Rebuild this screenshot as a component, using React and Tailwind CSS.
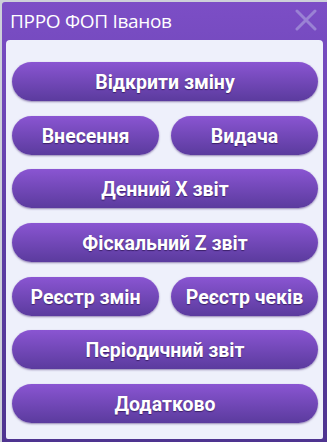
import React from "react";

const btn =
  "h-[39px] rounded-full bg-gradient-to-b from-[#8a55d2] to-[#5b3b9e] text-white text-[19.5px] font-bold flex items-center justify-center pt-[2px] shadow-[0_1px_2px_rgba(60,30,110,0.5)] [text-shadow:0_1px_1px_rgba(30,10,60,0.6)]";

function Btn({ children, className = "" }) {
  return (
    <button className={btn + " " + className} style={{ fontFamily: "Roboto, Arial, sans-serif" }}>
      {children}
    </button>
  );
}

export default function App() {
  return (
    <div
      className="w-[327px] h-[442px] bg-[#cdd0d9] pt-[2px] pl-[2px] flex"
      style={{ fontFamily: '"Open Sans", "Noto Sans", sans-serif' }}
    >
      <div className="flex-1 flex flex-col rounded-tl-[3px] bg-gradient-to-b from-[#7c4ec6] via-[#5e3ea6] to-[#4e3490] px-[4px] pb-[3px]">
        <div className="h-[38px] flex items-center justify-between pl-[4px] pr-[6px]">
          <span className="text-white text-[19px] tracking-[-0.3px]">ПРРО ФОП Іванов</span>
          <svg width="22" height="22" viewBox="0 0 22 22" className="mt-[-2px]">
            <path d="M2 2 L20 20 M20 2 L2 20" stroke="#9a82d4" strokeWidth="3" strokeLinecap="round" />
          </svg>
        </div>
        <div className="flex-1 bg-[#eef0fb] rounded-t-[4px] rounded-b-[2px] pl-[6px] pr-[5px] pt-[22px] flex flex-col gap-[14.7px]">
          <Btn>Відкрити зміну</Btn>
          <div className="flex gap-[12px]">
            <Btn className="flex-1">Внесення</Btn>
            <Btn className="flex-1">Видача</Btn>
          </div>
          <Btn>Денний X звіт</Btn>
          <Btn>Фіскальний Z звіт</Btn>
          <div className="flex gap-[12px]">
            <Btn className="flex-1">Реєстр змін</Btn>
            <Btn className="flex-1">Реєстр чеків</Btn>
          </div>
          <Btn>Періодичний звіт</Btn>
          <Btn>Додатково</Btn>
        </div>
      </div>
    </div>
  );
}
